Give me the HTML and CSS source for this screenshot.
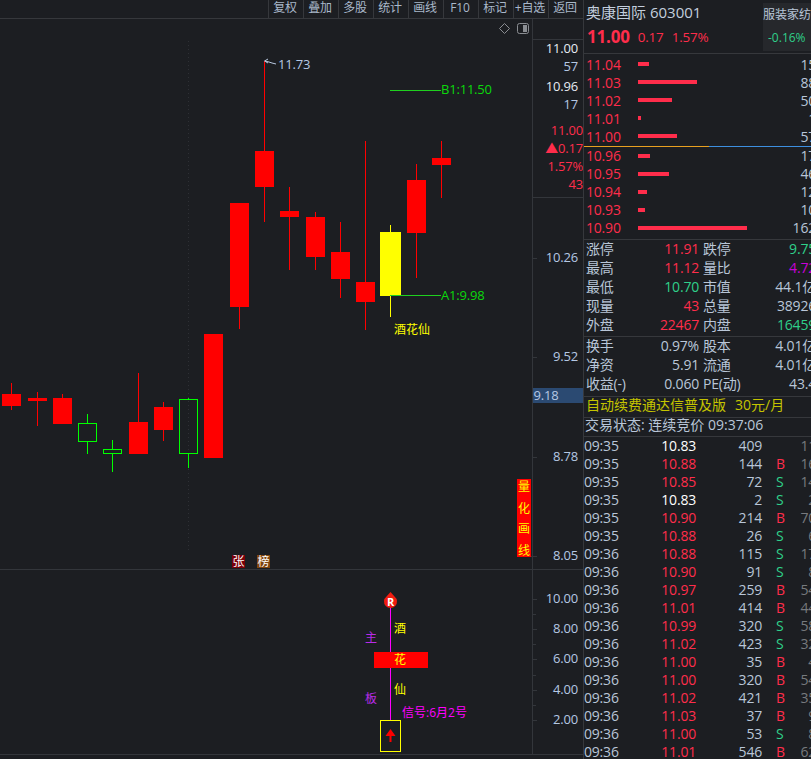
FILE: index.html
```html
<!DOCTYPE html>
<html lang="zh-CN">
<head>
  <meta charset="UTF-8">
  <title>奥康国际 603001</title>
  <link rel="stylesheet" href="styles.css">
</head>
<body>
  <div class="app">
    <div class="left">
      <div class="toolbar">
        <a>复权</a><a>叠加</a><a>多股</a><a>统计</a><a>画线</a><a>F10</a><a>标记</a><a>+自选</a><a>返回</a>
      </div>

      <!-- price chart -->
      <svg class="chart-main" width="583" height="550" viewBox="0 19 583 550">
        <line class="grid-dot" x1="188.5" y1="41" x2="188.5" y2="553"/>
        <line class="axis" x1="532.5" y1="19" x2="532.5" y2="569"/>
        <line class="axis" x1="533" y1="39.5" x2="583" y2="39.5"/>
        <line class="axis" x1="533" y1="197.5" x2="583" y2="197.5"/>
        <line class="axis" x1="533" y1="258.5" x2="537" y2="258.5"/>
        <line class="axis" x1="533" y1="357.5" x2="537" y2="357.5"/>
        <line class="axis" x1="533" y1="457.5" x2="537" y2="457.5"/>
        <line class="axis" x1="531" y1="556.5" x2="537" y2="556.5"/>

        <path class="icon" d="M504.5 23.5l5 5-5 5-5-5z"/>
        <rect class="icon" x="517.5" y="23.5" width="11" height="10" rx="2"/>
        <rect class="icon-fill" x="523" y="25" width="4" height="7"/>

        <g class="wick-red">
          <line x1="11.5" y1="383" x2="11.5" y2="410"/>
          <line x1="37.5" y1="392" x2="37.5" y2="426"/>
          <line x1="62.5" y1="394" x2="62.5" y2="400"/>
          <line x1="138.5" y1="373" x2="138.5" y2="424"/>
          <line x1="163.5" y1="402" x2="163.5" y2="441"/>
          <line x1="239.5" y1="300" x2="239.5" y2="329"/>
          <line x1="264.5" y1="61" x2="264.5" y2="222"/>
          <line x1="289.5" y1="187" x2="289.5" y2="270"/>
          <line x1="315.5" y1="212" x2="315.5" y2="270"/>
          <line x1="340.5" y1="222" x2="340.5" y2="298"/>
          <line x1="365.5" y1="141" x2="365.5" y2="330"/>
          <line x1="416.5" y1="164" x2="416.5" y2="278"/>
          <line x1="441.5" y1="141" x2="441.5" y2="198"/>
        </g>
        <g class="body-red">
          <rect x="2" y="394" width="19" height="12"/>
          <rect x="28" y="398" width="19" height="3"/>
          <rect x="53" y="398" width="19" height="26"/>
          <rect x="129" y="422" width="19" height="32"/>
          <rect x="154" y="407" width="19" height="23"/>
          <rect x="204" y="334" width="19" height="124"/>
          <rect x="230" y="203" width="19" height="104"/>
          <rect x="255" y="151" width="19" height="36"/>
          <rect x="280" y="211" width="19" height="6"/>
          <rect x="306" y="217" width="19" height="40"/>
          <rect x="331" y="252" width="19" height="27"/>
          <rect x="356" y="282" width="19" height="20"/>
          <rect x="407" y="180" width="19" height="53"/>
          <rect x="432" y="158" width="19" height="7"/>
        </g>
        <g class="wick-green">
          <line x1="87.5" y1="414" x2="87.5" y2="423"/>
          <line x1="87.5" y1="442" x2="87.5" y2="454"/>
          <line x1="112.5" y1="440" x2="112.5" y2="449"/>
          <line x1="112.5" y1="454" x2="112.5" y2="472"/>
          <line x1="188.5" y1="398" x2="188.5" y2="399"/>
          <line x1="188.5" y1="454" x2="188.5" y2="468"/>
        </g>
        <g class="body-green">
          <rect x="78.5" y="423.5" width="18" height="18"/>
          <rect x="103.5" y="449.5" width="18" height="4"/>
          <rect x="179.5" y="399.5" width="18" height="54"/>
        </g>
        <line class="wick-yellow" x1="390.5" y1="225" x2="390.5" y2="317"/>
        <rect class="body-yellow" x="380" y="232" width="21" height="64"/>

        <path class="high-mark" d="M268 59l-3.500 2 3.500 2M265 61l4 1 3 1 4 1"/>
        <text class="t-chart t-info" x="278" y="64">11.73</text>
        <line class="mark-line" x1="390" y1="90.500" x2="441" y2="90.500"/>
        <text class="t-chart t-green" x="441" y="89">B1:11.50</text>
        <line class="mark-line" x1="390" y1="295.500" x2="441" y2="295.500"/>
        <text class="t-chart t-green" x="441" y="295">A1:9.98</text>
        <text class="t-cjk t-yellow" x="394" y="329">酒花仙</text>

        <rect class="badge-red" x="232" y="555" width="13" height="13"/>
        <text class="t-cjk t-white" x="232.500" y="561.500">张</text>
        <rect class="badge-brown" x="257" y="555" width="13" height="13"/>
        <text class="t-cjk t-white" x="257.500" y="561.500">榜</text>

        <rect class="body-solid" x="517" y="479" width="14" height="78"/>
        <text class="t-cjk t-yellow t-mid" x="524" y="486">量</text>
        <text class="t-cjk t-yellow t-mid" x="524" y="508">化</text>
        <text class="t-cjk t-yellow t-mid" x="524" y="528">画</text>
        <text class="t-cjk t-yellow t-mid" x="524" y="550">线</text>

        <text class="t-axis t-light" x="578" y="48">11.00</text>
        <text class="t-axis t-info" x="578" y="66">57</text>
        <text class="t-axis t-light" x="578" y="86">10.96</text>
        <text class="t-axis t-info" x="578" y="104">17</text>
        <text class="t-axis t-red" x="583" y="130">11.00</text>
        <text class="t-axis t-red" x="583" y="148">▲0.17</text>
        <text class="t-axis t-red" x="583" y="166">1.57%</text>
        <text class="t-axis t-red" x="583" y="184">43</text>
        <text class="t-axis t-info" x="578" y="257">10.26</text>
        <text class="t-axis t-info" x="578" y="356">9.52</text>
        <rect class="price-tag" x="533" y="388" width="50" height="15"/>
        <text class="t-chart t-info" x="533.500" y="395">9.18</text>
        <text class="t-axis t-info" x="578" y="456">8.78</text>
        <text class="t-axis t-info" x="578" y="555">8.05</text>
      </svg>

      <!-- signal pane -->
      <svg class="chart-sub" width="583" height="190" viewBox="0 569 583 190">
        <line class="axis" x1="0" y1="569.500" x2="583" y2="569.500"/>
        <line class="axis" x1="532.5" y1="570" x2="532.5" y2="754"/>
        <line class="axis" x1="0" y1="754.500" x2="583" y2="754.500"/>
        <path class="axis" d="M533 599.500h4M533 614.500h3M533 629.500h4M533 644.500h3M533 659.500h4M533 675.500h3M533 690.500h4M533 705.500h3M533 720.500h4"/>

        <line class="signal-line" x1="390.500" y1="606" x2="390.500" y2="720"/>
        <rect class="body-solid" x="374" y="652" width="54" height="16"/>
        <path class="drop" d="M390.500 592l4 4.500a6.500 6.500 0 1 1-8 0z"/>
        <text class="t-drop" x="390.500" y="601.500">R</text>
        <rect class="signal-box" x="380.500" y="720.500" width="20" height="31"/>
        <path class="signal-arrow" d="M390.500 729l5 7h-4v6h-2v-6h-4z"/>

        <text class="t-cjk t-yellow" x="394" y="628.500">酒</text>
        <text class="t-cjk t-yellow" x="394" y="659">花</text>
        <text class="t-cjk t-yellow" x="394" y="689.500">仙</text>
        <text class="t-cjk t-violet" x="365" y="637">主</text>
        <text class="t-cjk t-violet" x="365" y="698">板</text>
        <text class="t-cjk t-magenta" x="402" y="712.500">信号:6月2号</text>

        <text class="t-axis t-info" x="578" y="598">10.00</text>
        <text class="t-axis t-info" x="578" y="628">8.00</text>
        <text class="t-axis t-info" x="578" y="658">6.00</text>
        <text class="t-axis t-info" x="578" y="689">4.00</text>
        <text class="t-axis t-info" x="578" y="719">2.00</text>
      </svg>
    </div>

    <div class="side">
      <div class="head">
        <div class="head-main">
          <div class="stock-name">奥康国际 603001</div>
          <div class="stock-quote">
            <b>11.00</b><span>0.17</span><span>1.57%</span>
          </div>
        </div>
        <div class="sector">
          <div class="sector-name">服装家纺</div>
          <div class="sector-pct">-0.16%</div>
        </div>
      </div>

      <div class="book book-high">
        <div class="book-row"><span>11.04</span><i><s style="width:11px"></s></i><em>15</em></div>
        <div class="book-row"><span>11.03</span><i><s style="width:59px"></s></i><em>88</em></div>
        <div class="book-row"><span>11.02</span><i><s style="width:34px"></s></i><em>50</em></div>
        <div class="book-row"><span>11.01</span><i><s style="width:3px"></s></i><em>1</em></div>
        <div class="book-row"><span>11.00</span><i><s style="width:39px"></s></i><em>57</em></div>
      </div>
      <div class="book-split"></div>
      <div class="book book-low">
        <div class="book-row"><span>10.96</span><i><s style="width:12px"></s></i><em>17</em></div>
        <div class="book-row"><span>10.95</span><i><s style="width:31px"></s></i><em>46</em></div>
        <div class="book-row"><span>10.94</span><i><s style="width:9px"></s></i><em>12</em></div>
        <div class="book-row"><span>10.93</span><i><s style="width:7px"></s></i><em>10</em></div>
        <div class="book-row"><span>10.90</span><i><s style="width:109px"></s></i><em>162</em></div>
      </div>

      <div class="stats stats-top">
        <div class="stat-row"><span>涨停</span><b class="red">11.91</b><span>跌停</span><b class="green">9.75</b></div>
        <div class="stat-row"><span>最高</span><b class="red">11.12</b><span>量比</span><b class="purple">4.72</b></div>
        <div class="stat-row"><span>最低</span><b class="green">10.70</b><span>市值</span><b>44.1亿</b></div>
        <div class="stat-row"><span>现量</span><b class="red">43</b><span>总量</span><b>38926</b></div>
        <div class="stat-row"><span>外盘</span><b class="red">22467</b><span>内盘</span><b class="green">16459</b></div>
      </div>
      <div class="stats stats-bottom">
        <div class="stat-row"><span>换手</span><b>0.97%</b><span>股本</span><b>4.01亿</b></div>
        <div class="stat-row"><span>净资</span><b>5.91</b><span>流通</span><b>4.01亿</b></div>
        <div class="stat-row"><span>收益(-)</span><b>0.060</b><span>PE(动)</span><b>43.4</b></div>
      </div>

      <div class="promo"><span>自动续费通达信普及版</span><span>30元/月</span></div>
      <div class="status">交易状态: 连续竞价 09:37:06</div>

      <div class="ticks">
        <div class="tick"><span>09:35</span><b class="white">10.83</b><span class="vol">409</span><u></u><em>11</em></div>
        <div class="tick"><span>09:35</span><b>10.88</b><span class="vol">144</span><u class="buy">B</u><em>16</em></div>
        <div class="tick"><span>09:35</span><b>10.85</b><span class="vol">72</span><u class="sell">S</u><em>14</em></div>
        <div class="tick"><span>09:35</span><b class="white">10.83</b><span class="vol">2</span><u class="sell">S</u><em>2</em></div>
        <div class="tick"><span>09:35</span><b>10.90</b><span class="vol">214</span><u class="buy">B</u><em>70</em></div>
        <div class="tick"><span>09:35</span><b>10.88</b><span class="vol">26</span><u class="sell">S</u><em>6</em></div>
        <div class="tick"><span>09:36</span><b>10.88</b><span class="vol">115</span><u class="sell">S</u><em>17</em></div>
        <div class="tick"><span>09:36</span><b>10.90</b><span class="vol">91</span><u class="sell">S</u><em>8</em></div>
        <div class="tick"><span>09:36</span><b>10.97</b><span class="vol">259</span><u class="buy">B</u><em>54</em></div>
        <div class="tick"><span>09:36</span><b>11.01</b><span class="vol">414</span><u class="buy">B</u><em>44</em></div>
        <div class="tick"><span>09:36</span><b>10.99</b><span class="vol">320</span><u class="sell">S</u><em>58</em></div>
        <div class="tick"><span>09:36</span><b>11.02</b><span class="vol">423</span><u class="sell">S</u><em>32</em></div>
        <div class="tick"><span>09:36</span><b>11.00</b><span class="vol">35</span><u class="buy">B</u><em>4</em></div>
        <div class="tick"><span>09:36</span><b>11.00</b><span class="vol">320</span><u class="buy">B</u><em>54</em></div>
        <div class="tick"><span>09:36</span><b>11.02</b><span class="vol">421</span><u class="buy">B</u><em>35</em></div>
        <div class="tick"><span>09:36</span><b>11.03</b><span class="vol">37</span><u class="buy">B</u><em>9</em></div>
        <div class="tick"><span>09:36</span><b>11.00</b><span class="vol">53</span><u class="sell">S</u><em>8</em></div>
        <div class="tick"><span>09:36</span><b>11.01</b><span class="vol">546</span><u class="buy">B</u><em>62</em></div>
      </div>
    </div>
  </div>
</body>
</html>
```

FILE: styles.css
```css
html, body {
  margin: 0;
  padding: 0;
  background-color: #1c1e22;
  overflow: hidden;
}
.app {
  display: flex;
  width: 811px;
  height: 759px;
  overflow: hidden;
  font-family: "Open Sans", "Noto Sans CJK SC", sans-serif;
  font-size: 14px;
  letter-spacing: -0.2px;
  color: #b9c6d8;
}
.left {
  width: 583px;
  flex: none;
}
svg {
  display: block;
}

/* toolbar */
.toolbar {
  display: flex;
  justify-content: flex-end;
  height: 18px;
  border-bottom: 1px solid #36383c;
}
.toolbar a {
  width: 32px;
  padding-right: 2px;
  border-left: 1px solid #36383c;
  font-size: 12px;
  line-height: 15px;
  text-align: center;
  color: #a9b8ca;
}

/* chart */
.axis {
  stroke: #33363b;
  fill: none;
}
.grid-dot {
  stroke: #2e3035;
  stroke-dasharray: 1 3;
}
.icon {
  stroke: #8a8d92;
  fill: none;
}
.icon-fill {
  fill: #8a8d92;
}
.wick-red line {
  stroke: #f00;
}
.body-red rect,
.body-solid {
  fill: #f00;
}
.wick-green line {
  stroke: #0f0;
}
.body-green rect {
  fill: none;
  stroke: #0f0;
}
.wick-yellow {
  stroke: #ff0;
}
.body-yellow {
  fill: #ff0;
}
.high-mark {
  stroke: #b8c8e0;
  fill: none;
}
.mark-line {
  stroke: #1fd01f;
}
.badge-red {
  fill: #7a0008;
}
.badge-brown {
  fill: #80450f;
}
.price-tag {
  fill: #2b4a72;
}
.signal-line {
  stroke: #f0f;
}
.drop {
  fill: #f01c10;
}
.signal-box {
  fill: none;
  stroke: #ff0;
}
.signal-arrow {
  fill: #f00;
}
.t-chart,
.t-axis,
.t-cjk,
.t-drop {
  dominant-baseline: central;
}
.t-chart {
  font-size: 13px;
}
.t-axis {
  font-size: 13px;
  text-anchor: end;
}
.t-cjk {
  font-size: 12px;
  letter-spacing: 0;
}
.t-mid {
  text-anchor: middle;
}
.t-drop {
  font-size: 11px;
  font-weight: bold;
  text-anchor: middle;
  fill: #fff;
}
.t-info { fill: #b5c8e4; }
.t-light { fill: #e6ebf2; }
.t-red { fill: #ff2d4b; }
.t-green { fill: #0bd80b; }
.t-yellow { fill: #ff0; }
.t-white { fill: #fff; }
.t-violet { fill: #b82ce8; }
.t-magenta { fill: #f0f; }

/* right panel */
.side {
  width: 234px;
  flex: none;
  box-sizing: border-box;
  border-left: 1px solid #36383c;
}
.head {
  display: flex;
  justify-content: space-between;
  height: 53px;
  border-bottom: 1px solid #36383c;
}
.stock-name {
  padding: 2px 0 0 2px;
  font-size: 15px;
  line-height: 21px;
  letter-spacing: 0;
  color: #c3cedd;
}
.stock-quote {
  display: flex;
  align-items: center;
  gap: 8px;
  height: 27px;
  padding-left: 3px;
  font-size: 13.500px;
  color: #ff2d4b;
}
.stock-quote b {
  font-size: 17px;
}
.sector {
  width: 54px;
  height: 48px;
  margin-top: 3px;
  background-color: #26282c;
  font-size: 12px;
  letter-spacing: 0;
}
.sector-name {
  line-height: 24px;
  white-space: nowrap;
}
.sector-pct {
  padding-left: 5px;
  line-height: 22px;
  color: #2fd08a;
}
.book-high {
  padding: 1px 0;
  line-height: 19px;
}
.book-low {
  padding-bottom: 2px;
  line-height: 17px;
}
.book-row {
  display: grid;
  grid-template-columns: 52px 1fr auto;
  grid-template-rows: 18px;
  height: 18px;
  padding: 0 1px 0 2px;
  color: #ff2d4b;
}
.book-row i {
  display: block;
  align-self: center;
}
.book-row s {
  display: block;
  height: 4px;
  background-color: #ff2d4b;
}
.book-row em {
  font-style: normal;
  color: #b9c6d8;
}
.book-split {
  height: 1px;
  background: linear-gradient(to right, #e8a020 125px, #3d8fe0 125px);
}
.stats {
  border-top: 1px solid #36383c;
}
.stats-top {
  padding-bottom: 1px;
}
.stats-bottom {
  padding-bottom: 2px;
}
.stat-row {
  display: grid;
  grid-template-columns: 58px 55px 60px 1fr;
  grid-template-rows: 19px;
  height: 19px;
  padding: 0 1px 0 2px;
  line-height: 17px;
  white-space: nowrap;
}
.stat-row b {
  font-weight: normal;
  text-align: right;
}
.stat-row span:nth-child(3) {
  padding-left: 4px;
}
.red { color: #ff2d4b; }
.green { color: #2fd08a; }
.purple { color: #c800d8; }
.promo {
  display: flex;
  gap: 9px;
  height: 20px;
  padding-left: 2px;
  border-top: 1px solid #36383c;
  line-height: 16px;
  letter-spacing: 0;
  color: #c4c400;
  white-space: nowrap;
}
.status {
  height: 18px;
  padding-left: 1px;
  border-top: 1px solid #36383c;
  border-bottom: 1px solid #36383c;
  line-height: 14px;
  letter-spacing: 0;
  white-space: nowrap;
}
.tick {
  display: grid;
  grid-template-columns: 57px 55px 66px 36px 1fr;
  grid-template-rows: 18px;
  height: 18px;
  padding-right: 1px;
  line-height: 17px;
}
.tick b {
  font-weight: normal;
  text-align: right;
  color: #ff2d4b;
}
.tick b.white {
  color: #fff;
}
.tick .vol {
  text-align: right;
}
.tick u {
  padding-left: 14px;
  text-decoration: none;
}
.tick .buy { color: #ff2d4b; }
.tick .sell { color: #2fd08a; }
.tick em {
  font-style: normal;
  text-align: right;
  color: #777a7e;
}
```
